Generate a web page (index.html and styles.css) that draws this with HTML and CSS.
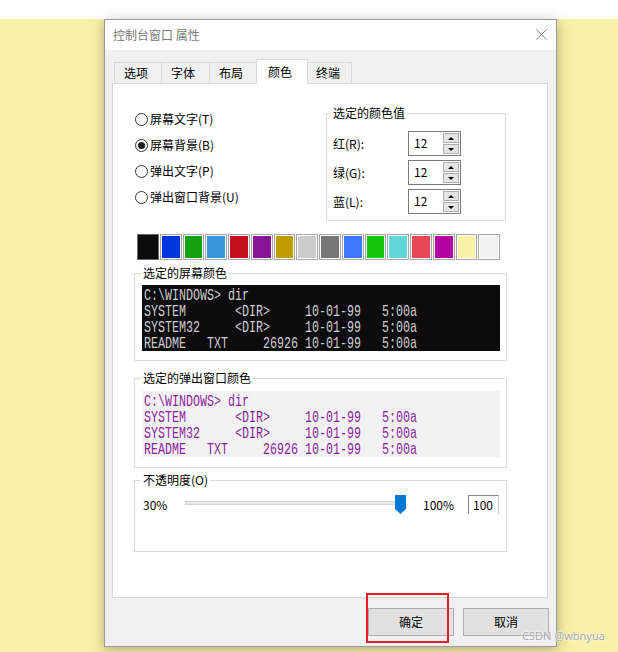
FILE: index.html
```html
<!DOCTYPE html>
<html lang="zh-CN">
<head>
<meta charset="utf-8">
<title>控制台窗口 属性</title>
<link rel="stylesheet" href="styles.css">
</head>
<body>
<div class="topband"></div>
<div class="dialog">
  <div class="titlebar">
    <span class="title">控制台窗口 属性</span>
    <svg class="close" width="11" height="11" viewBox="0 0 11 11"><path d="M0.5 0.5 L10.5 10.5 M10.5 0.5 L0.5 10.5" stroke="#7d7d7d" stroke-width="1" fill="none"/></svg>
  </div>
  <div class="body">
    <div class="tabs">
      <div class="tab w1">选项</div>
      <div class="tab w2">字体</div>
      <div class="tab w3">布局</div>
      <div class="tab w4 sel">颜色</div>
      <div class="tab w5">终端</div>
    </div>
    <div class="panel">
      <div class="toprow">
        <div class="radios">
          <div class="radio"><span class="circle"></span>屏幕文字(T)</div>
          <div class="radio"><span class="circle on"></span>屏幕背景(B)</div>
          <div class="radio"><span class="circle"></span>弹出文字(P)</div>
          <div class="radio"><span class="circle"></span>弹出窗口背景(U)</div>
        </div>
        <fieldset class="group colorval">
          <legend>选定的颜色值</legend>
          <div class="spinrow"><span class="lbl">红(R):</span><div class="spin"><span class="val">12</span><div class="btns"><span class="sb"><i class="up"></i></span><span class="sb"><i class="down"></i></span></div></div></div>
          <div class="spinrow"><span class="lbl">绿(G):</span><div class="spin"><span class="val">12</span><div class="btns"><span class="sb"><i class="up"></i></span><span class="sb"><i class="down"></i></span></div></div></div>
          <div class="spinrow"><span class="lbl">蓝(L):</span><div class="spin"><span class="val">12</span><div class="btns"><span class="sb"><i class="up"></i></span><span class="sb"><i class="down"></i></span></div></div></div>
        </fieldset>
      </div>
      <div class="swatches">
        <span class="sw c0 selsw"></span><span class="sw c1"></span><span class="sw c2"></span><span class="sw c3"></span>
        <span class="sw c4"></span><span class="sw c5"></span><span class="sw c6"></span><span class="sw c7"></span>
        <span class="sw c8"></span><span class="sw c9"></span><span class="sw c10"></span><span class="sw c11"></span>
        <span class="sw c12"></span><span class="sw c13"></span><span class="sw c14"></span><span class="sw c15"></span>
      </div>
      <fieldset class="group preview first">
        <legend>选定的屏幕颜色</legend>
        <div class="console screen">
          <span class="ln">C:\WINDOWS&gt; dir</span>
          <span class="ln">SYSTEM       &lt;DIR&gt;     10-01-99   5:00a</span>
          <span class="ln">SYSTEM32     &lt;DIR&gt;     10-01-99   5:00a</span>
          <span class="ln">README   TXT     26926 10-01-99   5:00a</span>
        </div>
      </fieldset>
      <fieldset class="group preview second">
        <legend>选定的弹出窗口颜色</legend>
        <div class="console popup">
          <span class="ln">C:\WINDOWS&gt; dir</span>
          <span class="ln">SYSTEM       &lt;DIR&gt;     10-01-99   5:00a</span>
          <span class="ln">SYSTEM32     &lt;DIR&gt;     10-01-99   5:00a</span>
          <span class="ln">README   TXT     26926 10-01-99   5:00a</span>
        </div>
      </fieldset>
      <fieldset class="group opacity">
        <legend>不透明度(O)</legend>
        <div class="oprow">
          <span class="pct1">30%</span>
          <div class="slider">
            <div class="track"></div>
            <svg class="thumb" width="11" height="19" viewBox="0 0 11 19"><path d="M0 0 H11 V14 L5.5 19 L0 14 Z" fill="#0078d7"/></svg>
          </div>
          <span class="pct2">100%</span>
          <span class="num">100</span>
        </div>
      </fieldset>
    </div>
    <div class="btnrow">
      <div class="button">确定</div>
      <div class="button">取消</div>
    </div>
  </div>
</div>
<div class="redmark"></div>
<div class="watermark">CSDN @wbnyua</div>
</body>
</html>
```
FILE: styles.css
```css
html, body {
  margin: 0;
  padding: 0;
}
body {
  background: #f8f0a6;
  font-family: "Noto Sans CJK SC", "Microsoft YaHei", sans-serif;
  font-size: 12px;
  line-height: 16px;
  color: #000;
  height: 652px;
  overflow: hidden;
}
.topband {
  height: 19px;
  background: #fff;
}
.dialog {
  margin-left: 104px;
  width: 453px;
  height: 628px;
  box-sizing: border-box;
  border: 1px solid #9a9a9a;
  background: #f0f0f0;
  box-shadow: 0 3px 12px rgba(40, 40, 40, 0.35);
  display: flex;
  flex-direction: column;
  position: relative;
}
.titlebar {
  height: 30px;
  flex: none;
  background: #fff;
  display: flex;
  align-items: center;
  justify-content: space-between;
  padding: 0 9px 0 8px;
}
.title {
  color: #7a7a7a;
}
.close {
  display: block;
  margin-top: -1px;
}
.body {
  flex: 1;
  padding: 9px 0 0 7px;
}
.tabs {
  display: flex;
  align-items: flex-end;
  height: 24px;
  margin-left: 2px;
}
.tab {
  box-sizing: border-box;
  height: 21px;
  border: 1px solid #d9d9d9;
  border-bottom: none;
  background: #f0f0f0;
  margin-right: -1px;
  padding-left: 9px;
  line-height: 20px;
}
.tab.sel {
  height: 25px;
  background: #fff;
  margin-bottom: -1px;
  position: relative;
  z-index: 1;
  line-height: 23px;
  padding-left: 11px;
}
.w1 { width: 48px; }
.w2 { width: 49px; }
.w3 { width: 48px; }
.w4 { width: 52px; }
.w5 { width: 45px; padding-left: 8px; }
.panel {
  width: 436px;
  height: 515px;
  box-sizing: border-box;
  border: 1px solid #d9d9d9;
  background: #fff;
}
.toprow {
  display: flex;
  align-items: flex-start;
  padding: 21px 0 0 22px;
}
.radios {
  width: 191px;
  flex: none;
  padding-top: 1px;
}
.radio {
  display: flex;
  align-items: center;
  gap: 2px;
  height: 26px;
}
.circle {
  width: 13px;
  height: 13px;
  box-sizing: border-box;
  border: 1px solid #333;
  border-radius: 50%;
  background: #fff;
  display: flex;
  align-items: center;
  justify-content: center;
}
.circle.on::after {
  content: "";
  width: 7px;
  height: 7px;
  border-radius: 50%;
  background: #1a1a1a;
}
.group {
  margin: 0;
  min-width: 0;
  box-sizing: border-box;
  border: 1px solid #dcdcdc;
}
.group legend {
  padding: 0 2px;
  margin-left: -2px;
  line-height: 16px;
}
.colorval {
  width: 180px;
  padding: 10px 0 6px 6px;
}
.spinrow {
  display: flex;
  align-items: center;
  height: 25px;
}
.spinrow + .spinrow {
  margin-top: 4px;
}
.lbl {
  width: 75px;
}
.spin {
  width: 53px;
  height: 25px;
  box-sizing: border-box;
  border: 1px solid #7a7a7a;
  padding: 1px;
  display: flex;
  background: #fff;
}
.val {
  flex: 1;
  padding-left: 4px;
  line-height: 19px;
}
.btns {
  width: 16px;
  display: flex;
  flex-direction: column;
  gap: 1px;
}
.sb {
  flex: 1;
  box-sizing: border-box;
  border: 1px solid #adadad;
  background: #e5e5e5;
  display: flex;
  align-items: center;
  justify-content: center;
}
.up {
  width: 0;
  height: 0;
  border-left: 3px solid transparent;
  border-right: 3px solid transparent;
  border-bottom: 3px solid #000;
}
.down {
  width: 0;
  height: 0;
  border-left: 3px solid transparent;
  border-right: 3px solid transparent;
  border-top: 3px solid #000;
}
.swatches {
  display: grid;
  grid-template-columns: repeat(16, 1fr);
  gap: 1px;
  width: 363px;
  height: 26px;
  margin: 13px 0 0 24px;
}
.sw {
  box-sizing: border-box;
  border: 1px solid #a5a5a5;
  box-shadow: inset 0 0 0 1px #fff;
}
.sw.selsw {
  border-color: #6a6a6a;
  box-shadow: none;
}
.c0 { background: #0c0c0c; }
.c1 { background: #0037da; }
.c2 { background: #13a10e; }
.c3 { background: #3a96dd; }
.c4 { background: #c50f1f; }
.c5 { background: #881798; }
.c6 { background: #c19c00; }
.c7 { background: #cccccc; }
.c8 { background: #767676; }
.c9 { background: #3b78ff; }
.c10 { background: #16c60c; }
.c11 { background: #61d6d6; }
.c12 { background: #e74856; }
.c13 { background: #b4009e; }
.c14 { background: #f9f1a5; }
.c15 { background: #f2f2f2; }
.preview {
  width: 373px;
  margin-left: 21px;
  padding: 4px 0 9px 7px;
}
.preview legend {
  margin-left: -1px;
}
.preview.first {
  margin-top: 5px;
}
.preview.second {
  margin-top: 9px;
  padding: 5px 0 10px 7px;
}
.console {
  width: 358px;
  height: 66px;
  box-sizing: border-box;
  padding: 3px 0 0 2px;
}
.console .ln {
  display: block;
  width: 270px;
  white-space: pre;
  font-family: "Liberation Mono", "DejaVu Sans Mono", monospace;
  font-size: 17px;
  line-height: 16px;
  height: 16px;
  transform: scaleX(0.686);
  transform-origin: 0 0;
}
.screen {
  background: #0c0c0c;
  color: #cccccc;
}
.popup {
  background: #f2f2f2;
  color: #8e1ea0;
}
.opacity {
  width: 373px;
  margin: 4px 0 0 21px;
  padding: 7px 0 37px 8px;
}
.oprow {
  display: flex;
  align-items: center;
  height: 19px;
}
.pct1 {
  width: 42px;
}
.slider {
  position: relative;
  width: 221px;
  height: 19px;
  margin-right: 17px;
}
.track {
  margin-top: 6px;
  width: 216px;
  height: 4px;
  box-sizing: border-box;
  border: 1px solid #d6d6d6;
  background: #e7e7e7;
}
.thumb {
  position: absolute;
  right: 0;
  top: 0;
  display: block;
}
.pct2 {
  width: 45px;
}
.num {
  width: 31px;
  height: 19px;
  box-sizing: border-box;
  border: 1px solid #8a8a8a;
  border-bottom: none;
  border-right-color: #c8c8c8;
  padding-left: 4px;
  line-height: 17px;
}
.btnrow {
  display: flex;
  justify-content: flex-end;
  gap: 9px;
  padding-right: 7px;
  margin-top: 10px;
}
.button {
  width: 86px;
  height: 28px;
  box-sizing: border-box;
  border: 1px solid #adadad;
  background: #e1e1e1;
  text-align: center;
  line-height: 26px;
}
.redmark {
  position: absolute;
  left: 366px;
  top: 593px;
  width: 83px;
  height: 50px;
  box-sizing: border-box;
  border: 2px solid #e81c24;
}
.watermark {
  position: absolute;
  left: 522px;
  top: 628px;
  font-family: "Noto Sans", "Liberation Sans", sans-serif;
  font-size: 11px;
  line-height: 16px;
  color: #a8a8a8;
  text-shadow: 0 0 2px #fff, 0 0 2px #fff;
}
```
